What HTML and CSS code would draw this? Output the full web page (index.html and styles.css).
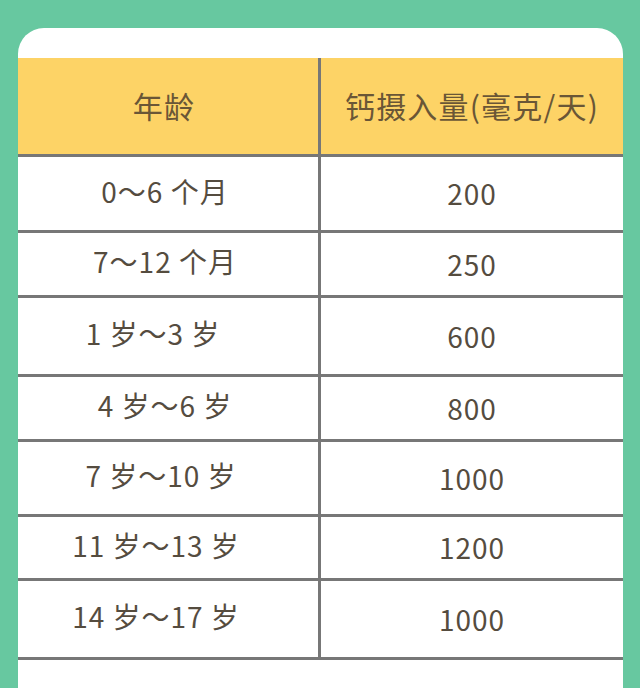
FILE: index.html
```html
<!DOCTYPE html>
<html lang="zh-CN">
<head>
<meta charset="utf-8">
<title>钙摄入量</title>
<link rel="stylesheet" href="styles.css">
</head>
<body>
<div class="card">
  <div class="table">
    <div class="cell head left">年龄</div>
    <div class="cell head right">钙摄入量(毫克/天)</div>

    <div class="cell left r76 off3">0～6 个月</div>
    <div class="cell right r76">200</div>

    <div class="cell left r65 off3">7～12 个月</div>
    <div class="cell right r65">250</div>

    <div class="cell left r79 off15">1 岁～3 岁</div>
    <div class="cell right r79">600</div>

    <div class="cell left r65 off3">4 岁～6 岁</div>
    <div class="cell right r65">800</div>

    <div class="cell left r75 off7">7 岁～10 岁</div>
    <div class="cell right r75">1000</div>

    <div class="cell left r64 off12">11 岁～13 岁</div>
    <div class="cell right r64">1200</div>

    <div class="cell left r79 off12">14 岁～17 岁</div>
    <div class="cell right r79">1000</div>
  </div>
</div>
</body>
</html>
```

FILE: styles.css
```css
* { box-sizing: border-box; }

html, body {
  margin: 0;
  height: 100%;
}

body {
  background: #67c8a0;
  padding: 28px 17px 0 18px;
  font-family: "Noto Sans CJK SC", "Noto Sans", sans-serif;
  overflow: hidden;
}

.card {
  background: #ffffff;
  border-radius: 26px 26px 0 0;
  padding-top: 30px;
  height: 100%;
}

.table {
  display: grid;
  grid-template-columns: 303px 1fr;
}

.cell {
  display: flex;
  align-items: center;
  justify-content: center;
  border-bottom: 3px solid #777777;
  color: #554c3f;
  font-size: 28px;
  line-height: 1;
  letter-spacing: 1px;
  white-space: nowrap;
}

.left {
  border-right: 3px solid #777777;
  padding-bottom: 6px;
}

.right {
  padding-bottom: 1px;
}

.head {
  height: 99px;
  background: #fdd366;
  color: #6a5636;
  font-size: 30px;
  letter-spacing: 1.2px;
  padding: 0 0 2px 0;
}

.head.left { padding-right: 8px; }

.r76 { height: 76px; }
.r65 { height: 65px; }
.r79 { height: 79px; }
.r75 { height: 75px; }
.r64 { height: 64px; }

.off3 { padding-right: 6px; }
.off7 { padding-right: 14px; }
.off12 { padding-right: 24px; }
.off15 { padding-right: 30px; }
```
